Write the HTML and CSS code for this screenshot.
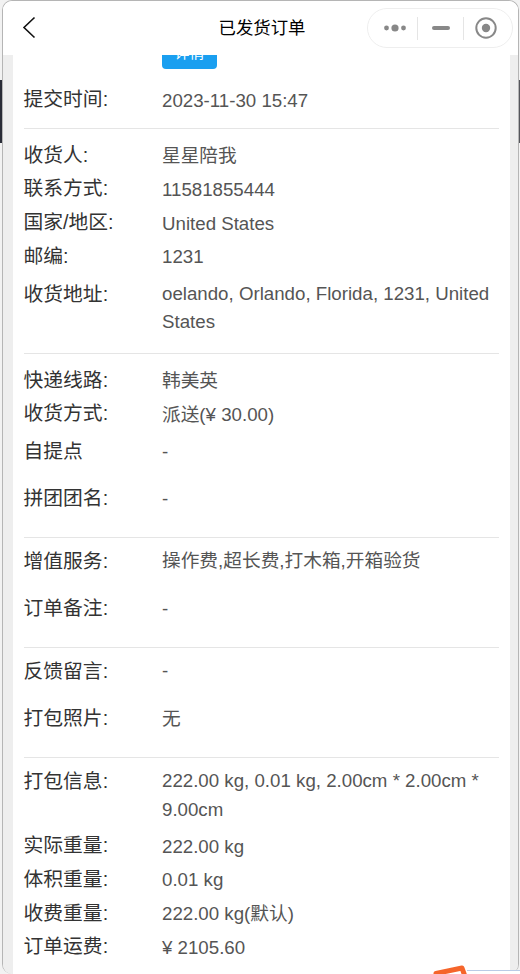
FILE: index.html
```html
<!DOCTYPE html>
<html lang="zh">
<head>
<meta charset="utf-8">
<title>已发货订单</title>
<link rel="stylesheet" href="styles.css">
</head>
<body>
<div class="desk desk-left"></div>
<div class="desk desk-right"></div>
<div class="phone">
  <header class="nav">
    <svg class="back" width="14" height="23" viewBox="0 0 14 23"><path d="M12.5 1.5 L2 11.5 L12.5 21.5" fill="none" stroke="#111" stroke-width="1.6"/></svg>
    <div class="title">已发货订单</div>
    <div class="capsule">
      <svg class="cap-more" width="24" height="10" viewBox="0 0 24 10"><circle cx="3.5" cy="5" r="2.4" fill="#888"/><circle cx="12" cy="5" r="3.6" fill="#888"/><circle cx="20.5" cy="5" r="2.4" fill="#888"/></svg>
      <span class="cap-sep sep-a"></span>
      <span class="cap-min"></span>
      <span class="cap-sep sep-b"></span>
      <svg class="cap-rec" width="22" height="22" viewBox="0 0 22 22"><circle cx="11" cy="11" r="9.7" fill="none" stroke="#888" stroke-width="2"/><circle cx="11" cy="11" r="4.2" fill="#888"/></svg>
    </div>
  </header>
  <main class="content">
    <div class="stub"><span class="btn">详情</span></div>
    <section class="group first">
      <div class="row"><span class="k">提交时间:</span><span class="v">2023-11-30 15:47</span></div>
    </section>
    <section class="group">
      <div class="row"><span class="k">收货人:</span><span class="v">星星陪我</span></div>
      <div class="row"><span class="k">联系方式:</span><span class="v">11581855444</span></div>
      <div class="row"><span class="k">国家/地区:</span><span class="v">United States</span></div>
      <div class="row"><span class="k">邮编:</span><span class="v">1231</span></div>
      <div class="row wrap"><span class="k">收货地址:</span><span class="v">oelando, Orlando, Florida, 1231, United States</span></div>
    </section>
    <section class="group">
      <div class="row"><span class="k">快递线路:</span><span class="v">韩美英</span></div>
      <div class="row"><span class="k">收货方式:</span><span class="v">派送(¥ 30.00)</span></div>
      <div class="row tall"><span class="k">自提点</span><span class="v">-</span></div>
      <div class="row tall"><span class="k">拼团团名:</span><span class="v">-</span></div>
    </section>
    <section class="group">
      <div class="row tall"><span class="k">增值服务:</span><span class="v">操作费,超长费,打木箱,开箱验货</span></div>
      <div class="row tall"><span class="k">订单备注:</span><span class="v">-</span></div>
    </section>
    <section class="group">
      <div class="row tall"><span class="k">反馈留言:</span><span class="v">-</span></div>
      <div class="row tall"><span class="k">打包照片:</span><span class="v">无</span></div>
    </section>
    <section class="group">
      <div class="row wrap"><span class="k">打包信息:</span><span class="v">222.00 kg, 0.01 kg, 2.00cm * 2.00cm * 9.00cm</span></div>
      <div class="row"><span class="k">实际重量:</span><span class="v">222.00 kg</span></div>
      <div class="row"><span class="k">体积重量:</span><span class="v">0.01 kg</span></div>
      <div class="row"><span class="k">收费重量:</span><span class="v">222.00 kg(默认)</span></div>
      <div class="row"><span class="k">订单运费:</span><span class="v">¥ 2105.60</span></div>
    </section>
  </main>
</div>
<div class="corner"></div>
<svg class="fab" width="40" height="14" viewBox="0 0 40 14"><path d="M5 12.5 L31 7 L33.5 14" fill="none" stroke="#f5652b" stroke-width="5" stroke-linejoin="round" stroke-linecap="round"/></svg>
</body>
</html>
```
FILE: styles.css
```css
html, body { margin: 0; padding: 0; }
body {
  position: relative;
  width: 520px;
  height: 974px;
  overflow: hidden;
  background: #f2f2f2;
  font-family: "Liberation Sans", "Noto Sans CJK SC", sans-serif;
}
.desk { position: absolute; top: 80px; width: 3px; height: 63px; background: #2a2d38; }
.desk-left { left: 0; }
.desk-right { right: 0; background: #55565c; }
.phone {
  position: relative;
  box-sizing: border-box;
  width: 517px;
  height: 974px;
  margin-left: 2px;
  overflow: hidden;
  background: #fff;
  border: 1px solid #b5b5b5;
  border-bottom: 0;
  border-radius: 10px;
}
.nav {
  position: relative;
  box-sizing: border-box;
  display: flex;
  align-items: center;
  justify-content: center;
  height: 54px;
  padding: 0 0 3px 3px;
  background: #fff;
  z-index: 2;
}
.back { position: absolute; left: 19px; top: 15px; }
.title { font-size: 17.4px; color: #000; }
.capsule {
  position: absolute;
  right: 5px;
  top: 7px;
  box-sizing: border-box;
  width: 146px;
  height: 40px;
  display: flex;
  align-items: center;
  padding-left: 15px;
  border: 1px solid #eee;
  border-radius: 20px;
}
.cap-sep { width: 1px; height: 23px; background: #e5e5e5; }
.sep-a { margin: 0 14px 0 10px; }
.sep-b { margin: 0 11px 0 13px; }
.cap-min { width: 18px; height: 4px; border-radius: 2px; background: #888; }
.content {
  box-sizing: border-box;
  height: 919px;
  margin: 0 8px 0 10px;
  padding: 0 11px;
  background: #fff;
  box-shadow: -10px 0 0 #eee, 10px 0 0 #eee;
  color: #333;
}
.stub { height: 14px; overflow: hidden; padding-left: 138px; }
.btn {
  display: block;
  width: 55px;
  height: 28px;
  margin-top: -14px;
  background: #1a9ff0;
  color: #fff;
  border-radius: 4px;
  font-size: 15px;
  line-height: 24px;
  text-align: center;
}
.group { border-bottom: 1px solid #e5e5e5; padding: 9.4px 0 11.4px; }
.group.first { padding-top: 14px; }
.group:last-child { border-bottom: 0; }
.row { display: flex; line-height: 33.75px; }
.k { flex: 0 0 138px; color: #333; font-size: 19.8px; margin-left: -0.5px; }
.v { flex: 1; color: #555; font-size: 18.7px; margin-left: 0.5px; position: relative; top: 0.5px; }
.wrap { line-height: 28.1px; padding: 6px 0; }
.wrap:first-child { padding-top: 0; }
.tall { line-height: 28.1px; padding: 6px 0 13px; }
.tall:first-child { padding-top: 0; }
.corner {
  position: absolute;
  left: 467px;
  top: 970px;
  width: 53px;
  height: 4px;
  background: #fff;
  border-top: 1px solid #b9cbe6;
}
.fab { position: absolute; left: 431px; top: 961px; }
```
